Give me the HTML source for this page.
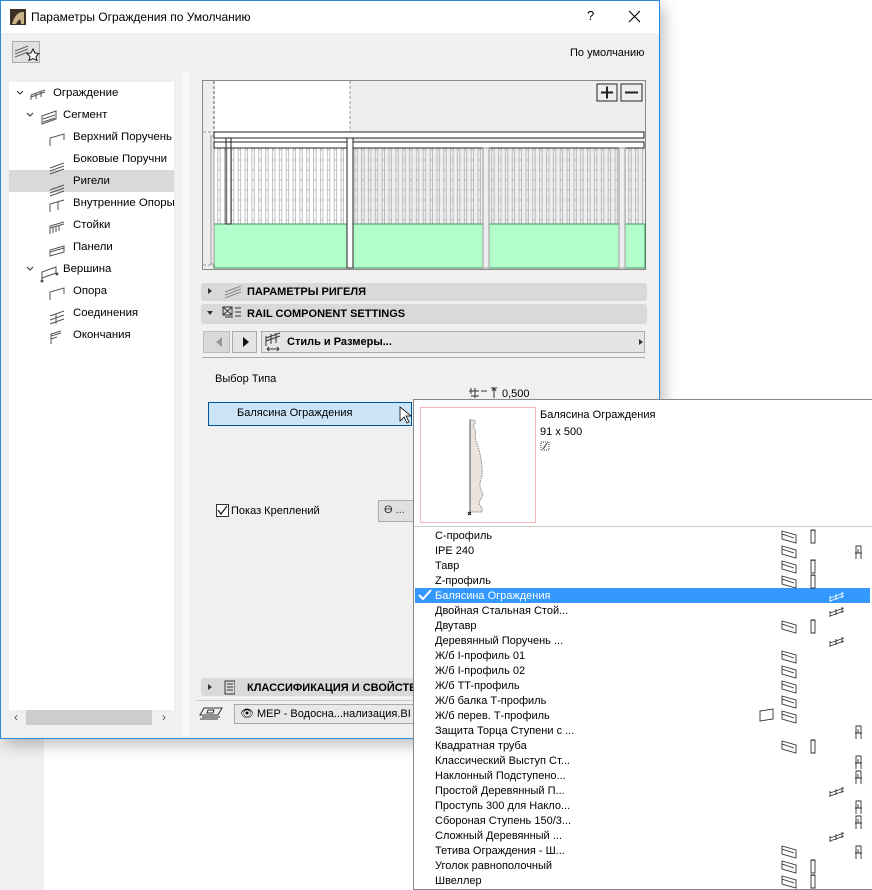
<!DOCTYPE html>
<html><head><meta charset="utf-8">
<style>
*{margin:0;padding:0;box-sizing:border-box}
body{width:872px;height:890px;position:relative;overflow:hidden;background:#fff;font-family:"Segoe UI","Liberation Sans","DejaVu Sans",sans-serif;font-size:11px;color:#000}
.a{position:absolute}
.t{position:absolute;white-space:nowrap;line-height:14px}
.b{font-weight:bold}
.tr{font-size:11.4px}
</style></head><body>
<div class="a" style="left:0;top:0;width:44px;height:890px;background:#f0f0f0"></div>
<!-- window -->
<div class="a" style="left:0;top:0;width:660px;height:739px;background:#f0f0f0;border:1px solid #2b88d8;box-shadow:4px 6px 14px rgba(0,0,0,.25)">
 <div class="a" style="left:0;top:0;width:658px;height:32px;background:#fff"></div>
</div>
<!-- title -->
<svg class="a" style="left:10px;top:9px" width="16" height="16"><rect width="16" height="16" fill="#3a3025"/><path d="M2 15 Q6 2 14 3 L14 15 L11 15 Q11 6 6 15Z" fill="#c9b48a"/></svg>
<div class="t" style="left:31px;top:10px;font-size:12px">Параметры Ограждения по Умолчанию</div>
<div class="t" style="left:587px;top:9px;font-size:13px">?</div>
<svg class="a" style="left:628px;top:10px" width="13" height="13"><path d="M1 1L12 12M12 1L1 12" stroke="#000" stroke-width="1.1"/></svg>
<!-- favorite icon -->
<div class="a" style="left:12px;top:41px;width:28px;height:22px;border:1px solid #adadad;background:#e1e1e1"></div>
<svg class="a" style="left:14px;top:43px" width="26" height="20"><path d="M1 8L14 3M1 11L14 6M1 14L14 9" stroke="#666"/><path d="M19 6l2 4 4 .5-3 3 1 4-4-2-4 2 1-4-3-3 4-.5z" fill="#fff" stroke="#222"/></svg>
<div class="t" style="left:570px;top:46px">По умолчанию</div>
<!-- tree -->
<div class="a" style="left:9px;top:82px;width:165px;height:628px;background:#fff"></div>
<div class="a" style="left:182px;top:72px;width:7px;height:664px;background:#f7f7f7"></div>
<div class="a" style="left:9px;top:170px;width:165px;height:22px;background:#d9d9d9"></div>
<svg class="a" style="left:9px;top:79px" width="165" height="270" fill="none" stroke="#555" stroke-width="1">
 <path d="M8 12l3 3 3-3M18 34l3 3 3-3M18 188l3 3 3-3" stroke="#333"/>
 <path d="M22 18l14-5M22 16v5M27 15v5M32 13v5M22 16l14-5" />
 <path d="M33 37l14-5v8l-14 5zM34 40l12-4M34 43l12-4"/>
 <path d="M41 67v-8l14-4v6" /><path d="M41 89l14-5M41 92l14-5M41 95l14-5"/>
 <path d="M41 111l14-5M41 114l14-5M41 117l14-5"/>
 <path d="M41 133v-8l14-4M49 131v-8"/>
 <path d="M41 155v-8l14-4M44 154v-6M47 153v-6M50 152v-6M41 149l14-4"/>
 <path d="M41 177l14-4v-6l-14 4zM41 173l14-4"/>
 <path d="M33 199l14-5v-6l-14 5zM33 201v-8" /><circle cx="33" cy="202" r="1" fill="#333"/><circle cx="48" cy="195" r="1" fill="#333"/>
 <path d="M41 221v-8l14-4v6"/>
 <path d="M41 245l14-5M41 241l14-5M41 237l14-5M47 245v-10"/>
 <path d="M42 265v-10l10-3M42 257l10-3M42 260l6-2"/>
</svg>
<div class="t tr" style="left:53px;top:86px">Ограждение</div>
<div class="t tr" style="left:63px;top:108px">Сегмент</div>
<div class="t tr" style="left:73px;top:130px">Верхний Поручень</div>
<div class="t tr" style="left:73px;top:152px">Боковые Поручни</div>
<div class="t tr" style="left:73px;top:174px">Ригели</div>
<div class="t tr" style="left:73px;top:196px">Внутренние Опоры</div>
<div class="t tr" style="left:73px;top:218px">Стойки</div>
<div class="t tr" style="left:73px;top:240px">Панели</div>
<div class="t tr" style="left:63px;top:262px">Вершина</div>
<div class="t tr" style="left:73px;top:284px">Опора</div>
<div class="t tr" style="left:73px;top:306px">Соединения</div>
<div class="t tr" style="left:73px;top:328px">Окончания</div>
<!-- tree scrollbar -->
<div class="a" style="left:9px;top:710px;width:165px;height:16px;background:#f0f0f0"></div>
<div class="a" style="left:26px;top:710px;width:126px;height:15px;background:#cdcdcd"></div>
<div class="t" style="left:14px;top:710px;font-size:12px;color:#555">‹</div>
<div class="t" style="left:162px;top:710px;font-size:12px;color:#555">›</div>
<!-- preview -->
<svg class="a" style="left:202px;top:80px" width="444" height="190">
 <defs><pattern id="bal" x="0" y="0" width="6.85" height="10" patternUnits="userSpaceOnUse"><rect x="2" y="0" width="2.5" height="10" fill="none" stroke="#a4a9ad" stroke-width=".7"/></pattern></defs>
 <rect x="0" y="0" width="444" height="190" fill="#eee" stroke="#888" stroke-width="2"/>
 <rect x="12" y="1" width="136" height="51" fill="#fff"/>
 <rect x="12" y="52" width="136" height="92" fill="#fff"/>
 <rect x="12" y="64" width="430" height="80" fill="url(#bal)"/>
 <rect x="12" y="144" width="431" height="44" fill="#b3fdcc" stroke="#1a7a32" stroke-width=".8"/>
 <line x1="12" y1="1" x2="12" y2="188" stroke="#555" stroke-dasharray="3,2"/>
 <line x1="148" y1="1" x2="148" y2="52" stroke="#999" stroke-dasharray="3,2"/>
 <line x1="1" y1="52" x2="12" y2="52" stroke="#999" stroke-dasharray="3,2"/><line x1="1" y1="185" x2="12" y2="185" stroke="#999" stroke-dasharray="3,2"/>
 <rect x="9" y="56" width="3" height="128" fill="none" stroke="#999"/>
 <rect x="12" y="52" width="430" height="6" fill="#fff" stroke="#222"/>
 <rect x="12" y="62" width="430" height="6" fill="#fff" stroke="#222"/>
 <rect x="24" y="58" width="5" height="86" fill="none" stroke="#222"/>
 <rect x="145" y="58" width="6" height="130" fill="#fff" stroke="#222"/>
 <rect x="281" y="68" width="6" height="120" fill="#eee" stroke="#999"/>
 <rect x="417" y="68" width="6" height="120" fill="#eee" stroke="#999"/>
 <rect x="395" y="4" width="20" height="17" fill="#eee" stroke="#222"/><path d="M399 12.5h12M405 6.5v12" stroke="#222" stroke-width="2"/>
 <rect x="419" y="4" width="21" height="17" fill="#eee" stroke="#222"/><path d="M423 12.5h13" stroke="#222" stroke-width="2"/>
</svg>
<!-- section headers -->
<div class="a" style="left:201px;top:283px;width:446px;height:18px;background:#d9d9d9;border-radius:3px"></div>
<div class="a" style="left:201px;top:304px;width:446px;height:20px;background:#d9d9d9;border-radius:3px"></div>
<svg class="a" style="left:205px;top:285px" width="40" height="38"><path d="M3 3l4 3-4 3z" fill="#333"/><path d="M20 10l16-6M20 7l16-6M20 13l16-6" stroke="#888"/><path d="M2 26l6 0-3 4z" fill="#333"/><path d="M18 22h9v8h-9zM18 22l9 8M27 22l-9 8M30 23h6M30 27h6M30 31h6M20 32h8" stroke="#333" fill="none"/></svg>
<div class="t b" style="left:247px;top:285px">ПАРАМЕТРЫ РИГЕЛЯ</div>
<div class="t b" style="left:247px;top:307px">RAIL COMPONENT SETTINGS</div>
<!-- nav row -->
<div class="a" style="left:203px;top:331px;width:27px;height:22px;background:#d9d9d9;border:1px solid #bbb"></div>
<div class="a" style="left:232px;top:331px;width:25px;height:22px;background:#e5e5e5;border:1px solid #aaa"></div>
<div class="a" style="left:261px;top:331px;width:384px;height:22px;background:#e5e5e5;border:1px solid #aaa"></div>
<svg class="a" style="left:203px;top:331px" width="444" height="22"><path d="M19 6l-6 5 6 5z" fill="#999"/><path d="M40 6l6 5-6 5z" fill="#111"/><path d="M436 8l4 3-4 3z" fill="#333"/><path d="M63 10l14-5M63 7l14-5M63 5v10M68 3v10M73 2v10M64 18h12M64 18l2-2M64 18l2 2M76 18l-2-2M76 18l-2 2" stroke="#333" fill="none"/></svg>
<div class="t b" style="left:287px;top:335px">Стиль и Размеры...</div>
<div class="a" style="left:202px;top:357px;width:443px;height:1px;background:#aaa"></div>
<div class="t" style="left:215px;top:372px">Выбор Типа</div>
<svg class="a" style="left:468px;top:386px" width="34" height="14"><path d="M3 2v6M1 5h10M7 2v10M3 10h8M13 5h6" stroke="#333" fill="none"/><path d="M23 2h6M26 2v10M24 5l2-3 2 3" stroke="#333" fill="none"/></svg>
<div class="t" style="left:502px;top:387px">0,500</div>
<div class="a" style="left:208px;top:402px;width:204px;height:24px;background:#cce4f7;border:1px solid #005499"></div>
<div class="t" style="left:237px;top:406px">Балясина Ограждения</div>
<svg class="a" style="left:398px;top:404px" width="16" height="26"><path d="M2 3v14l4-4 3 6 2-1-3-6h5z" fill="#fff" stroke="#000" stroke-width=".8"/></svg>
<div class="a" style="left:216px;top:504px;width:13px;height:13px;border:1px solid #333;background:#fff"></div>
<svg class="a" style="left:216px;top:504px" width="13" height="13"><path d="M2 6l3 4 6-8" stroke="#222" fill="none" stroke-width="1.3"/></svg>
<div class="t" style="left:231px;top:504px">Показ Креплений</div>
<div class="a" style="left:378px;top:500px;width:36px;height:22px;background:#e0e0e0;border:1px solid #adadad"></div>
<div class="t" style="left:384px;top:503px;color:#333">Ө ...</div>
<!-- bottom -->
<div class="a" style="left:201px;top:678px;width:215px;height:18px;background:#d9d9d9;border-radius:3px"></div>
<svg class="a" style="left:205px;top:680px" width="30" height="16"><path d="M3 4l4 3-4 3z" fill="#333"/><path d="M20 1h10v13h-10zM22 4h6M22 7h6M22 10h6" stroke="#333" fill="none"/></svg>
<div class="t b" style="left:247px;top:681px">КЛАССИФИКАЦИЯ И СВОЙСТВА</div>
<div class="a" style="left:197px;top:700px;width:217px;height:1px;background:#ccc"></div>
<svg class="a" style="left:198px;top:704px" width="28" height="18"><path d="M6 4h18l-4 7H2zM4 13h18M2 15h18M10 6h6l-1 3h-6z" stroke="#333" fill="none"/></svg>
<div class="a" style="left:234px;top:704px;width:182px;height:20px;background:#e8e8e8;border:1px solid #aaa"></div>
<div class="t" style="left:240px;top:707px">👁 MEP - Водосна...нализация.BI</div>
<!-- popup -->
<div class="a" style="left:413px;top:399px;width:459px;height:491px;background:#fff;border:1px solid #888;border-right:none"></div>
<div class="a" style="left:420px;top:407px;width:116px;height:116px;border:1px solid #f3b6b6"></div>
<svg class="a" style="left:458px;top:418px" width="30" height="100"><path d="M12 2h5v4l-2 2q4 6 2 12q8 20 7 38q-4 10 0 16q2 4-2 8q-2 4 2 8v4H12z" fill="#ece4dc" stroke="#888" stroke-dasharray="1.5,1"/><path d="M12 2V96" stroke="#555"/><path d="M10 94l3 3M13 94l-3 3" stroke="#000"/></svg>
<div class="t" style="left:540px;top:408px">Балясина Ограждения</div>
<div class="t" style="left:540px;top:425px">91 x 500</div>
<svg class="a" style="left:540px;top:441px" width="12" height="10"><rect x="1" y="1" width="8" height="8" fill="none" stroke="#333" stroke-dasharray="1,1"/><path d="M3 8l4-6" stroke="#333"/></svg>
<div class="a" style="left:414px;top:526px;width:458px;height:1px;background:#ccc"></div>
<div class="a" style="left:415px;top:588px;width:455px;height:15px;background:#3399ff"></div>
<svg class="a" style="left:418px;top:589px" width="14" height="12"><path d="M1 6l4 4 8-9" stroke="#fff" stroke-width="2" fill="none"/></svg>
<div class="a" style="left:435px;top:529px;font-size:11px;line-height:15px;white-space:nowrap">
С-профиль<br>IPE 240<br>Тавр<br>Z-профиль<br><span style="color:#fff">Балясина Ограждения</span><br>Двойная Стальная Стой...<br>Двутавр<br>Деревянный Поручень ...<br>Ж/б I-профиль 01<br>Ж/б I-профиль 02<br>Ж/б TT-профиль<br>Ж/б балка Т-профиль<br>Ж/б перев. Т-профиль<br>Защита Торца Ступени с ...<br>Квадратная труба<br>Классический Выступ Ст...<br>Наклонный Подступено...<br>Простой Деревянный П...<br>Проступь 300 для Накло...<br>Сбороная Ступень 150/3...<br>Сложный Деревянный ...<br>Тетива Ограждения - Ш...<br>Уголок равнополочный<br>Швеллер</div>
<svg class="a" style="left:750px;top:529px" width="122" height="361" fill="none" stroke="#333" stroke-width=".9">
 <defs>
  <g id="bm"><path d="M32 2l14 4v8l-14-4z M32 2v3l12 4"/></g>
  <g id="cl"><path d="M61 1h4v13h-4zM61 2q2-2 4 0"/></g>
  <g id="rl"><path d="M80 12l14-5M80 9l14-5M80 7v6M86 5v6M92 3v6"/></g>
  <g id="ch"><path d="M106 2h5v7h-5zM105 9h7M106 9v6M111 9v6M108 5v4"/></g>
 </defs>
 <use href="#bm" y="0"/><use href="#cl" y="0"/>
 <use href="#bm" y="15"/><use href="#ch" y="15"/>
 <use href="#bm" y="30"/><use href="#cl" y="30"/>
 <use href="#bm" y="45"/><use href="#cl" y="45"/>
 <use href="#rl" y="60" stroke="#fff"/>
 <use href="#rl" y="75"/>
 <use href="#bm" y="90"/><use href="#cl" y="90"/>
 <use href="#rl" y="105"/>
 <use href="#bm" y="120"/><use href="#bm" y="135"/><use href="#bm" y="150"/><use href="#bm" y="165"/>
 <use href="#bm" y="180"/><path d="M10 182l13-2v10l-13 2z"/>
 <use href="#ch" y="195"/>
 <use href="#bm" y="210"/><use href="#cl" y="210"/>
 <use href="#ch" y="225"/><use href="#ch" y="240"/>
 <use href="#rl" y="255"/>
 <use href="#ch" y="270"/><use href="#ch" y="285"/>
 <use href="#rl" y="300"/>
 <use href="#bm" y="315"/><use href="#ch" y="315"/>
 <use href="#bm" y="330"/><use href="#cl" y="330"/>
 <use href="#bm" y="345"/><use href="#cl" y="345"/>
</svg>
</body></html>
